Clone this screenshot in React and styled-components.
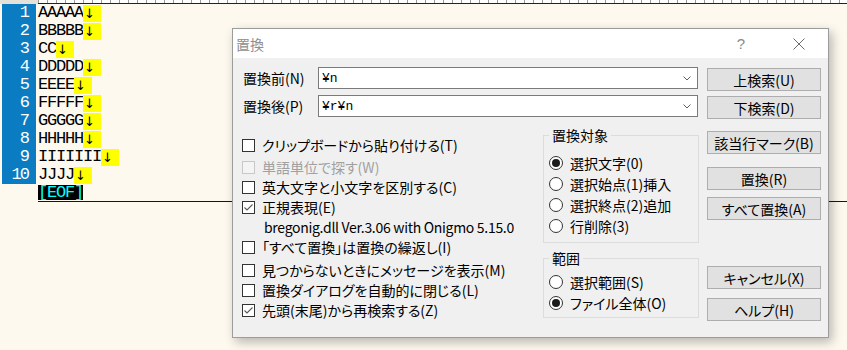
import React from 'react'
import styled, { createGlobalStyle } from 'styled-components'

const GlobalStyle = createGlobalStyle`
  html, body { margin: 0; padding: 0; }
  body { width: 847px; height: 350px; overflow: hidden; background: #fdf9ef; }
`

const Editor = styled.div`
  position: relative;
  width: 847px;
  height: 350px;
  background: #fdf9ef;
  font-family: "Liberation Mono", monospace;
`
const Ruler = styled.div`
  height: 4px;
  display: flex;
`
const RulerCorner = styled.div`
  width: 38px;
  background: #e4e1d8;
`
const RulerScale = styled.div`
  flex: 1;
  background: repeating-linear-gradient(to right, #9a9a9a 0 1px, #fff 1px 9px);
  border-bottom: 1px solid #222;
  box-sizing: border-box;
`
const Lines = styled.div`
  display: flex;
  flex-direction: column;
`
const Line = styled.div`
  display: flex;
  height: 18px;
`
const Gutter = styled.div`
  width: 34px;
  margin-left: 2px;
  margin-right: 2px;
  box-sizing: border-box;
  padding-right: 8px;
  background: ${p => (p.$empty ? 'transparent' : '#0b7cc1')};
  color: #fff;
  text-align: right;
  font-size: 17px;
  line-height: 18px;
  letter-spacing: -2px;
`
const Text = styled.span`
  font-size: 17px;
  letter-spacing: -1.2px;
  line-height: 18px;
  color: #000;
  white-space: pre;
`
const Eol = styled.span`
  width: 18px;
  height: 17px;
  margin-top: 1px;
  background: #ffff00;
  color: #000;
  font-family: "DejaVu Sans", sans-serif;
  font-size: 13px;
  line-height: 17px;
  padding-left: 1px;
  box-sizing: border-box;
`
const EofMark = styled.span`
  background: #000;
  color: #00ffff;
  font-size: 17px;
  letter-spacing: -1.2px;
  line-height: 15px;
  height: 15px;
  margin-top: 1px;
  white-space: pre;
`
const CursorLine = styled.div`
  flex: 1;
  display: flex;
  border-bottom: 1px solid #0000c8;
  height: 17px;
`

const Dialog = styled.div`
  position: absolute;
  left: 232px;
  top: 28px;
  width: 597px;
  height: 310px;
  box-sizing: border-box;
  border: 1px solid #9c9c9c;
  background: #f0f0f0;
  box-shadow: 3px 4px 10px rgba(0, 0, 0, 0.28);
  font-family: "Noto Sans CJK JP", sans-serif;
  font-size: 14px;
  font-feature-settings: "palt";
  color: #000;
  display: flex;
  flex-direction: column;
`
const TitleBar = styled.div`
  height: 29px;
  background: #fff;
  display: flex;
  align-items: center;
  padding-left: 3px;
  color: #8f8f8f;
`
const Title = styled.div`
  flex: 1;
`
const TitleButton = styled.div`
  width: 46px;
  height: 29px;
  display: flex;
  align-items: center;
  justify-content: center;
  margin-right: ${p => p.$mr || 0}px;
  color: #8a8a8a;
  font-family: "Liberation Sans", sans-serif;
  font-size: 15px;
`
const Body = styled.div`
  flex: 1;
  display: flex;
  padding: 9px 7px 0 10px;
`
const Main = styled.div`
  width: 457px;
  display: flex;
  flex-direction: column;
`
const FieldRow = styled.div`
  display: flex;
  align-items: center;
  height: 22px;
  margin-top: ${p => p.$mt || 0}px;
`
const FieldLabel = styled.div`
  width: 75px;
`
const Combo = styled.div`
  width: 380px;
  height: 22px;
  box-sizing: border-box;
  border: 1px solid #7a7a7a;
  background: #fff;
  display: flex;
  align-items: center;
  padding: 0 6px 0 3px;
`
const ComboText = styled.div`
  flex: 1;
  font-family: "Liberation Mono", monospace;
  font-size: 13px;
`
const Lower = styled.div`
  display: flex;
  margin-top: 10px;
`
const Checks = styled.div`
  width: 301px;
  margin-left: -1px;
  padding-top: 8px;
  display: flex;
  flex-direction: column;
`
const CheckRow = styled.div`
  height: 20px;
  display: flex;
  align-items: center;
  gap: 7px;
  margin-top: ${p => p.$mt || 0}px;
  padding-left: ${p => p.$indent || 0}px;
  color: ${p => (p.$disabled ? '#a0a0a0' : '#000')};
  white-space: nowrap;
`
const Note = styled.span`
  letter-spacing: -0.3px;
`
const Box = styled.span`
  width: 13px;
  height: 13px;
  box-sizing: border-box;
  border: 1px solid ${p => (p.$disabled ? '#c8c8c8' : '#333')};
  background: ${p => (p.$disabled ? '#f4f4f4' : '#fff')};
  display: flex;
  align-items: center;
  justify-content: center;
  flex-shrink: 0;
`
const Groups = styled.div`
  width: 156px;
  display: flex;
  flex-direction: column;
`
const Group = styled.fieldset`
  margin: ${p => p.$mt || 0}px 0 0 0;
  padding: ${p => p.$pt}px 4px ${p => p.$pb}px 5px;
  border: 1px solid #dcdcdc;
  min-width: 0;
`
const Legend = styled.legend`
  padding: 0 3px;
  line-height: 16px;
  font-size: 14px;
`
const RadioRow = styled.div`
  height: 21px;
  display: flex;
  align-items: center;
  gap: 7px;
  white-space: nowrap;
`
const Radio = styled.span`
  width: 14px;
  height: 14px;
  box-sizing: border-box;
  border-radius: 50%;
  border: 1px solid #333;
  background: #fff;
  display: flex;
  align-items: center;
  justify-content: center;
  flex-shrink: 0;
  &::after {
    content: '';
    width: 8px;
    height: 8px;
    border-radius: 50%;
    background: #1b1b1b;
    display: ${p => (p.$on ? 'block' : 'none')};
  }
`
const Buttons = styled.div`
  width: 114px;
  margin-left: 7px;
  margin-top: 1px;
  display: flex;
  flex-direction: column;
`
const Button = styled.div`
  height: 23px;
  box-sizing: border-box;
  margin-top: ${p => p.$mt || 0}px;
  border: 1px solid #adadad;
  background: #e1e1e1;
  display: flex;
  align-items: center;
  justify-content: center;
  white-space: nowrap;
`

const Check = () => (
  <svg width="11" height="11" viewBox="0 0 11 11">
    <polyline points="1.5,5.5 4,8 9.5,2.5" fill="none" stroke="#5a5a5a" strokeWidth="1.1" />
  </svg>
)

const Chevron = () => (
  <svg width="8" height="5" viewBox="0 0 8 5">
    <polyline points="0.5,0.5 4,4 7.5,0.5" fill="none" stroke="#606060" strokeWidth="1" />
  </svg>
)

const CloseIcon = () => (
  <svg width="12" height="12" viewBox="0 0 12 12">
    <path d="M0.5 0.5 L11.5 11.5 M11.5 0.5 L0.5 11.5" stroke="#6a6a6a" strokeWidth="1" />
  </svg>
)

const lines = ['AAAAA', 'BBBBB', 'CC', 'DDDDD', 'EEEE', 'FFFFF', 'GGGGG', 'HHHHH', 'IIIIIII', 'JJJJ']

const checks = [
  { text: 'クリップボードから貼り付ける(T)' },
  { text: '単語単位で探す(W)', mt: 2, disabled: true },
  { text: '英大文字と小文字を区別する(C)' },
  { text: '正規表現(E)', checked: true },
  { note: 'bregonig.dll Ver.3.06 with Onigmo 5.15.0' },
  { text: '「すべて置換」は置換の繰返し(I)' },
  { text: '見つからないときにメッセージを表示(M)', mt: 3 },
  { text: '置換ダイアログを自動的に閉じる(L)' },
  { text: '先頭(末尾)から再検索する(Z)', checked: true },
]

const buttons = [
  { label: '上検索(U)', mt: 0 },
  { label: '下検索(D)', mt: 5 },
  { label: '該当行マーク(B)', mt: 12 },
  { label: '置換(R)', mt: 13 },
  { label: 'すべて置換(A)', mt: 7 },
  { label: 'キャンセル(X)', mt: 46 },
  { label: 'ヘルプ(H)', mt: 9 },
]

export default function App() {
  return (
    <>
      <GlobalStyle />
      <Editor>
        <Ruler>
          <RulerCorner />
          <RulerScale />
        </Ruler>
        <Lines>
          {lines.map((t, i) => (
            <Line key={i}>
              <Gutter>{i + 1}</Gutter>
              <Text>{t}</Text>
              <Eol>↓</Eol>
            </Line>
          ))}
          <Line>
            <Gutter $empty />
            <CursorLine>
              <EofMark>[EOF]</EofMark>
            </CursorLine>
          </Line>
        </Lines>

        <Dialog>
          <TitleBar>
            <Title>置換</Title>
            <TitleButton $mr={12}>?</TitleButton>
            <TitleButton $mr={6}><CloseIcon /></TitleButton>
          </TitleBar>
          <Body>
            <Main>
              <FieldRow>
                <FieldLabel>置換前(N)</FieldLabel>
                <Combo><ComboText>¥n</ComboText><Chevron /></Combo>
              </FieldRow>
              <FieldRow $mt={6}>
                <FieldLabel>置換後(P)</FieldLabel>
                <Combo><ComboText>¥r¥n</ComboText><Chevron /></Combo>
              </FieldRow>
              <Lower>
                <Checks>
                  {checks.map((c, i) =>
                    c.note ? (
                      <CheckRow key={i} $indent={22}><Note>{c.note}</Note></CheckRow>
                    ) : (
                      <CheckRow key={i} $mt={c.mt} $disabled={c.disabled}>
                        <Box $disabled={c.disabled}>{c.checked && <Check />}</Box>
                        {c.text}
                      </CheckRow>
                    )
                  )}
                </Checks>
                <Groups>
                  <Group $pt={9} $pb={6}>
                    <Legend>置換対象</Legend>
                    <RadioRow><Radio $on />選択文字(0)</RadioRow>
                    <RadioRow><Radio />選択始点(1)挿入</RadioRow>
                    <RadioRow><Radio />選択終点(2)追加</RadioRow>
                    <RadioRow><Radio />行削除(3)</RadioRow>
                  </Group>
                  <Group $mt={7} $pt={5} $pb={4}>
                    <Legend>範囲</Legend>
                    <RadioRow><Radio />選択範囲(S)</RadioRow>
                    <RadioRow><Radio $on />ファイル全体(O)</RadioRow>
                  </Group>
                </Groups>
              </Lower>
            </Main>
            <Buttons>
              {buttons.map(b => (
                <Button key={b.label} $mt={b.mt}>{b.label}</Button>
              ))}
            </Buttons>
          </Body>
        </Dialog>
      </Editor>
    </>
  )
}
